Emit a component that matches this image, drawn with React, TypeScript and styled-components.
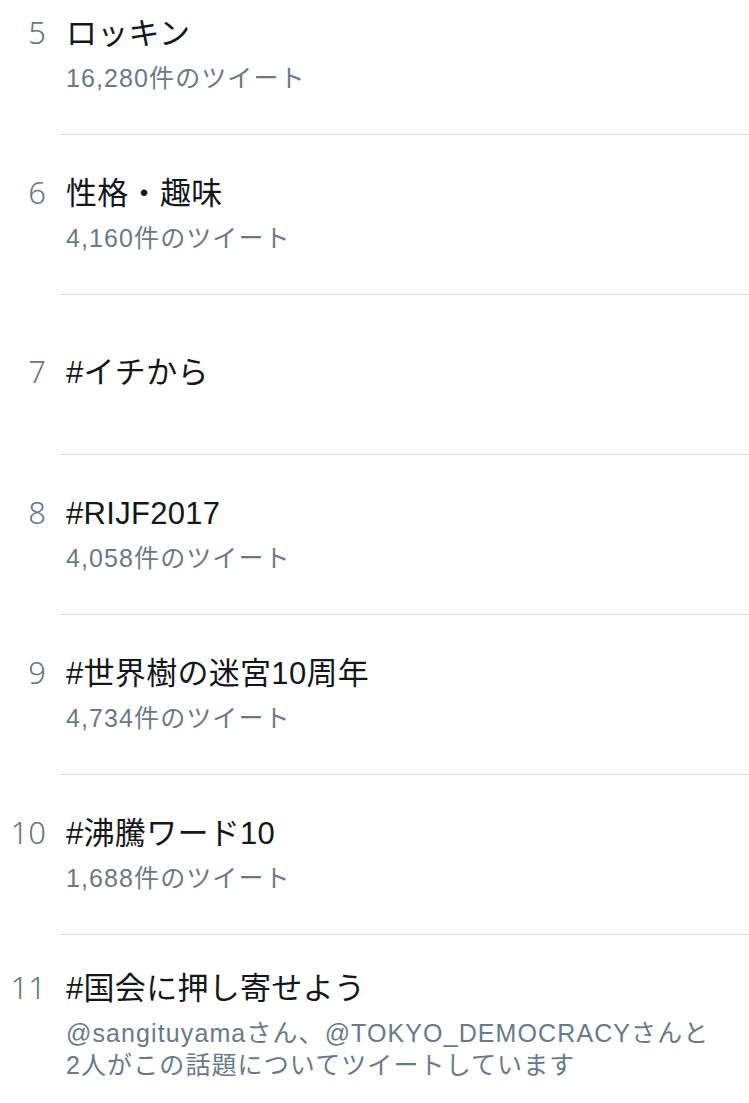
import React from "react"
import styled, { createGlobalStyle } from "styled-components"

const GlobalStyle = createGlobalStyle`
    html, body {
        margin: 0;
        padding: 0;
        background: #ffffff;
        overflow: hidden;
    }
    body {
        font-family: "Liberation Sans", "Noto Sans CJK JP", sans-serif;
        -webkit-font-smoothing: antialiased;
    }
`

const List = styled.div`
    margin-top: -25px;
    display: flex;
    flex-direction: column;
`

const Row = styled.div`
    display: grid;
    grid-template-columns: 60px 1fr;
    align-content: center;
    align-items: baseline;
    min-height: 160px;
    padding: 31px 0 37px;
    box-sizing: border-box;
    background: linear-gradient(#d3dbe1, #d3dbe1) no-repeat left 60px bottom / calc(100% - 60px) 1px;
`

const Rank = styled.div`
    grid-column: 1;
    grid-row: 1;
    text-align: right;
    padding-right: 14px;
    font-family: "Noto Sans", "Noto Sans CJK JP", sans-serif;
    font-weight: 300;
    font-size: 31px;
    line-height: 42px;
    color: #66757f;
`

const Title = styled.div`
    grid-column: 2;
    grid-row: 1;
    padding-left: 6px;
    font-size: 31px;
    line-height: 42px;
    letter-spacing: 0.3px;
    color: #14171a;
    white-space: nowrap;
`

const Meta = styled.div`
    grid-column: 2;
    grid-row: 2;
    padding-left: 6px;
    margin-top: 7px;
    font-size: 25px;
    line-height: 32px;
    letter-spacing: 1.1px;
    color: #687a88;
    white-space: nowrap;
`

type Trend = { rank: number; title: string; meta?: string[] }

const trends: Trend[] = [
    { rank: 5, title: "ロッキン", meta: ["16,280件のツイート"] },
    { rank: 6, title: "性格・趣味", meta: ["4,160件のツイート"] },
    { rank: 7, title: "#イチから" },
    { rank: 8, title: "#RIJF2017", meta: ["4,058件のツイート"] },
    { rank: 9, title: "#世界樹の迷宮10周年", meta: ["4,734件のツイート"] },
    { rank: 10, title: "#沸騰ワード10", meta: ["1,688件のツイート"] },
    {
        rank: 11,
        title: "#国会に押し寄せよう",
        meta: ["@sangituyamaさん、@TOKYO_DEMOCRACYさんと", "2人がこの話題についてツイートしています"],
    },
]

export default function App() {
    return (
        <>
            <GlobalStyle />
            <List>
                {trends.map((t) => (
                    <Row key={t.rank}>
                        <Rank>{t.rank}</Rank>
                        <Title>{t.title}</Title>
                        {t.meta && (
                            <Meta>
                                {t.meta.map((line) => (
                                    <div key={line}>{line}</div>
                                ))}
                            </Meta>
                        )}
                    </Row>
                ))}
            </List>
        </>
    )
}
